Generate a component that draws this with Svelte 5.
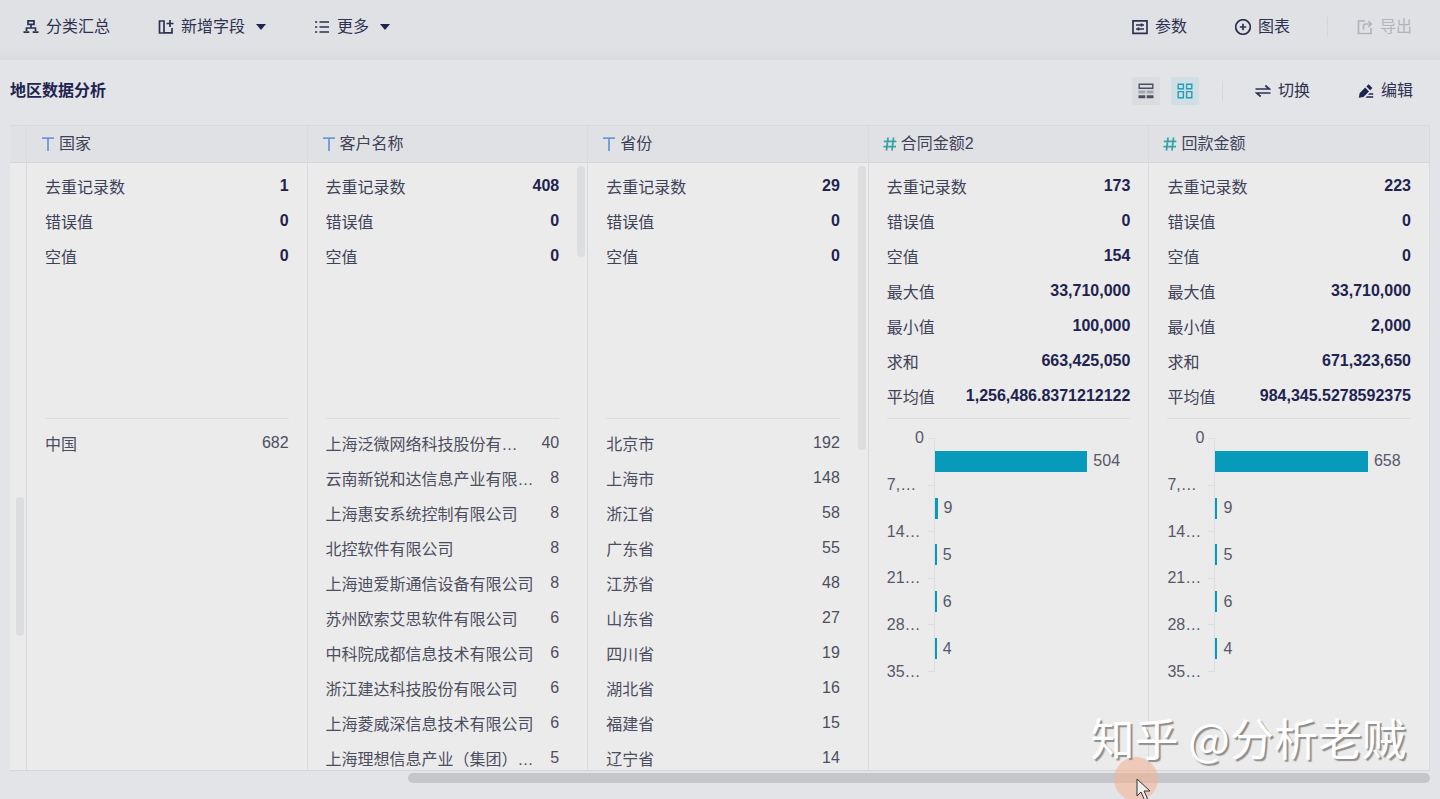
<script>
    const icons = {
        summary: "M5 1.8h6v3.6H5zM8 5.4V9M3.5 12V9h9v3M.5 13.2h5.8M9.7 13.2h5.8",
        addField: "M1.5 2h4.5v12H1.5zM6 13.8h8V9M12 1v7M8.5 4.5h7",
        more: "M5.5 3H15M5.5 8H15M5.5 13H15M1 3h2.2M1 8h2.2M1 13h2.2",
        params: "M1 1.8h14v12.6H1zM4 6h8M4 10h8M9.5 4.5v3M6.5 8.5v3",
        chart: "M8 .7a7.3 7.3 0 1 0 0 14.6A7.3 7.3 0 1 0 8 .7M8 4.8v6.4M4.8 8h6.4",
        export: "M8 2H1.5v12.5h12.5V9M6.5 10.5V7.5q0-2.5 2-2.5H14M11.3 2l3 3-3 3",
        swap: "M.5 6h14L10.3 2.5M15.5 10h-14l4.2 3.5",
    };

    const labels = {
        stats: ["去重记录数", "错误值", "空值", "最大值", "最小值", "求和", "平均值"],
        bins: ["0", "7,…", "14…", "21…", "28…", "35…"],
    };

    const fields = [
        {
            name: "国家",
            type: "text",
            stats: ["1", "0", "0"],
            rows: [["中国", 682]],
        },
        {
            name: "客户名称",
            type: "text",
            stats: ["408", "0", "0"],
            thumb: 15,
            rows: [
                ["上海泛微网络科技股份有…", 40],
                ["云南新锐和达信息产业有限…", 8],
                ["上海惠安系统控制有限公司", 8],
                ["北控软件有限公司", 8],
                ["上海迪爱斯通信设备有限公司", 8],
                ["苏州欧索艾思软件有限公司", 6],
                ["中科院成都信息技术有限公司", 6],
                ["浙江建达科技股份有限公司", 6],
                ["上海菱威深信息技术有限公司", 6],
                ["上海理想信息产业（集团）…", 5],
            ],
        },
        {
            name: "省份",
            type: "text",
            stats: ["29", "0", "0"],
            thumb: 47,
            rows: [
                ["北京市", 192],
                ["上海市", 148],
                ["浙江省", 58],
                ["广东省", 55],
                ["江苏省", 48],
                ["山东省", 27],
                ["四川省", 19],
                ["湖北省", 16],
                ["福建省", 15],
                ["辽宁省", 14],
            ],
        },
        {
            name: "合同金额2",
            type: "number",
            stats: ["173", "0", "154", "33,710,000", "100,000", "663,425,050", "1,256,486.8371212122"],
            bars: [504, 9, 5, 6, 4],
        },
        {
            name: "回款金额",
            type: "number",
            stats: ["223", "0", "0", "33,710,000", "2,000", "671,323,650", "984,345.5278592375"],
            bars: [658, 9, 5, 6, 4],
        },
    ];

    // the longest bar leaves room for its label
    function barWidth(value, bars) {
        return (value / Math.max(...bars)) * 78;
    }
</script>

{#snippet icon(name)}
    <svg class="icon" viewBox="0 0 16 16" aria-hidden="true"><path d={icons[name]} /></svg>
{/snippet}

{#snippet caret()}
    <svg class="caret" viewBox="0 0 10 6" aria-hidden="true"><path d="M0 0h10L5 6z" /></svg>
{/snippet}

<div class="page">
    <header class="toolbar">
        <button>{@render icon("summary")}分类汇总</button>
        <button>{@render icon("addField")}新增字段{@render caret()}</button>
        <button>{@render icon("more")}更多{@render caret()}</button>
        <div class="right">
            <button>{@render icon("params")}参数</button>
            <button>{@render icon("chart")}图表</button>
            <span class="separator"></span>
            <button disabled>{@render icon("export")}导出</button>
        </div>
    </header>

    <div class="subbar">
        <h1>地区数据分析</h1>
        <div class="views">
            <button class="view" aria-label="表格视图">
                <svg viewBox="0 0 16 16" aria-hidden="true">
                    <path d="M1.2 1.2h13.6v4H1.2z" fill="none" stroke="currentColor" stroke-width="1.4" />
                    <path d="M.5 7.5h6.8v3H.5zM8.7 7.5h6.8v3H8.7z" fill="#a3a5af" />
                    <path d="M.5 12.3h6.8v3H.5zM8.7 12.3h6.8v3H8.7z" fill="currentColor" />
                </svg>
            </button>
            <button class="view active" aria-label="卡片视图">
                <svg viewBox="0 0 16 16" aria-hidden="true">
                    <path
                        d="M1.2 1.2h5.2v4.6H1.2zM9.6 1.2h5.2v4.6H9.6zM1.2 8.6h5.2v6.2H1.2zM9.6 8.6h5.2v6.2H9.6z"
                        fill="none"
                        stroke="currentColor"
                        stroke-width="1.4"
                    />
                </svg>
            </button>
        </div>
        <span class="separator"></span>
        <div class="actions">
            <button>{@render icon("swap")}切换</button>
            <button>
                <svg class="pencil" viewBox="0 0 16 16" aria-hidden="true">
                    <path d="M.8 14.8l.8-4.6 5.6-5.6 3.8 3.8-5.6 5.6zM8.4 3.4L10.6 1.2l3.8 3.8-2.2 2.2zM11.5 10.3h3.7v1.5H10zM9 13.3h6.2v1.5H7.5z" />
                </svg>编辑
            </button>
        </div>
    </div>

    <main>
        <div class="board">
            <div class="previous">
                <div class="head"></div>
                <div class="track"><span class="thumb"></span></div>
            </div>
            {#each fields as field}
                <section>
                    <h2 class="head">
                        {#if field.type === "text"}
                            <svg class="type text" viewBox="0 0 14 16" aria-hidden="true"><path d="M1 2.2h12M7 2.2V15" /></svg>
                        {:else}
                            <svg class="type number" viewBox="0 0 14 16" aria-hidden="true">
                                <path d="M5 1.5L3.5 14.5M10.5 1.5L9 14.5M.8 5.3h12.6M.4 10.7H13" />
                            </svg>
                        {/if}
                        {field.name}
                    </h2>
                    <div class="body">
                        <div class="content">
                            <table class="stats">
                                <tbody>
                                    {#each field.stats as value, i}
                                        <tr><th scope="row">{labels.stats[i]}</th><td>{value}</td></tr>
                                    {/each}
                                </tbody>
                            </table>
                            {#if field.rows}
                                <table class="values">
                                    <tbody>
                                        {#each field.rows as [label, count]}
                                            <tr><th scope="row">{label}</th><td>{count}</td></tr>
                                        {/each}
                                    </tbody>
                                </table>
                            {:else}
                                <div class="chart">
                                    <div class="labels">
                                        {#each labels.bins as bin}<span>{bin}</span>{/each}
                                    </div>
                                    <div class="ticks">
                                        {#each field.bars as _}<i></i>{/each}
                                    </div>
                                    <div class="plot">
                                        {#each field.bars as value}
                                            <div class="bar-row">
                                                <span class="bar" style="width: {barWidth(value, field.bars)}%"></span>
                                                <span>{value}</span>
                                            </div>
                                        {/each}
                                    </div>
                                </div>
                            {/if}
                        </div>
                        {#if field.thumb}
                            <div class="track"><span class="thumb" style="height: {field.thumb}%"></span></div>
                        {/if}
                    </div>
                </section>
            {/each}
        </div>
        <div class="scrollbar"><span></span></div>
    </main>

    <div class="pointer">
        <svg viewBox="0 0 16 24" aria-hidden="true">
            <path d="M1 1v17l4-4 3.5 8 3-1.4L8 13h6z" />
        </svg>
    </div>
    <div class="watermark">知乎 @分析老贼</div>
</div>

<style>
    :global(body) {
        margin: 0;
    }

    .page {
        position: relative;
        display: flex;
        flex-direction: column;
        height: 100vh;
        overflow: hidden;
        background: #e3e4e8;
        color: #3e4257;
        font-family: "Liberation Sans", "Noto Sans CJK SC", sans-serif;
        font-size: 16px;
        line-height: 20px;
    }

    button {
        display: flex;
        align-items: center;
        gap: 7px;
        padding: 0;
        border: 0;
        background: none;
        color: #2d3150;
        font: inherit;
        cursor: pointer;
    }

    button:disabled {
        color: #b3b4bb;
        cursor: default;
    }

    svg {
        flex: none;
        width: 16px;
        height: 16px;
    }

    .icon {
        fill: none;
        stroke: currentColor;
        stroke-width: 1.7;
    }

    .caret {
        width: 10px;
        height: 6px;
        margin-left: 4px;
        fill: #1e2350;
    }

    .pencil {
        fill: #1e2350;
    }

    .toolbar {
        display: flex;
        flex: none;
        align-items: center;
        gap: 48px;
        box-sizing: border-box;
        height: 60px;
        padding: 0 28px 6px 23px;
        background: linear-gradient(#e0e1e5 75%, #dadbdf);
    }

    .right {
        display: flex;
        align-items: center;
        gap: 48px;
        margin-left: auto;
    }

    .separator {
        width: 1px;
        height: 20px;
        background: #d5d6da;
    }

    .right .separator {
        margin: 0 -19px 0 -11px;
    }

    .subbar {
        display: flex;
        flex: none;
        align-items: center;
        box-sizing: border-box;
        height: 65px;
        padding: 0 27px 4px 10px;
    }

    h1 {
        margin: 0 auto 0 0;
        color: #1e2350;
        font-size: 16px;
        font-weight: bold;
    }

    .views {
        display: flex;
        gap: 11px;
        margin-right: 23px;
    }

    .view {
        justify-content: center;
        width: 28px;
        height: 28px;
        border-radius: 2px;
        background: #dbdce0;
        color: #4b4d62;
    }

    .view.active {
        background: #cfdfe4;
        color: #229dbb;
    }

    .actions {
        display: flex;
        gap: 48px;
        margin-left: 32px;
    }

    main {
        display: flex;
        flex: 1;
        flex-direction: column;
        min-height: 0;
        padding: 0 10px 16px;
    }

    .board {
        display: grid;
        flex: 1;
        grid-template-columns: 17px repeat(5, minmax(0, 1fr));
        grid-template-rows: minmax(0, 1fr);
        min-height: 0;
        border-top: 1px solid #d8d9dd;
        border-bottom: 1px solid #d5d6d9;
        background: #ebebeb;
    }

    section,
    .previous {
        display: flex;
        flex-direction: column;
        min-height: 0;
        border-right: 1px solid #d9dade;
    }

    .head {
        display: flex;
        flex: none;
        align-items: center;
        gap: 4px;
        box-sizing: border-box;
        height: 37px;
        margin: 0;
        padding-left: 14px;
        border-bottom: 1px solid #d5d6da;
        background: #e0e1e5;
        color: #3e4257;
        font-size: 16px;
        font-weight: normal;
    }

    .type {
        width: 14px;
        fill: none;
        stroke-width: 1.8;
    }

    .type.text {
        stroke: #6c9ad8;
    }

    .type.number {
        stroke: #38a3a5;
    }

    .body {
        display: flex;
        flex: 1;
        min-height: 0;
        overflow: hidden;
    }

    .content {
        flex: 1;
        min-width: 0;
        padding: 0 18px;
    }

    .track {
        flex: none;
        width: 10px;
        padding-top: 3px;
    }

    .thumb {
        display: block;
        width: 8px;
        border-radius: 4px;
        background: #dcdddf;
    }

    /* this list is scrolled most of the way down */
    .previous .track {
        display: flex;
        flex: 1;
        flex-direction: column;
        margin-left: 6px;
        padding-top: 0;
    }

    .previous .track::before {
        content: "";
        height: 55%;
    }

    .previous .thumb {
        height: 23%;
    }

    table {
        display: block;
        box-sizing: border-box;
    }

    tbody {
        display: block;
    }

    tr {
        display: flex;
        align-items: center;
        gap: 12px;
        height: 35px;
    }

    th {
        flex: 1;
        min-width: 0;
        padding: 0;
        overflow: hidden;
        font-weight: normal;
        text-align: left;
        white-space: nowrap;
    }

    td {
        padding: 0 0 4px;
    }

    .stats {
        height: 256px;
        padding-top: 7px;
        border-bottom: 1px solid #dcdddf;
    }

    .stats td {
        color: #1e2350;
        font-weight: bold;
    }

    .values {
        padding-top: 8px;
        color: #4b4e60;
    }

    .chart {
        display: flex;
        height: 234px;
        margin-top: 19px;
        color: #55586a;
    }

    .labels {
        display: flex;
        flex-direction: column;
        justify-content: space-between;
        width: 37px;
        margin: -10px 4px -10px 0;
    }

    .labels span:first-child {
        text-align: right;
    }

    .ticks {
        display: flex;
        flex-direction: column;
        width: 6px;
        border-right: 1px solid #dcdde1;
        border-bottom: 1px solid #dcdde1;
    }

    .ticks i {
        flex: 1;
        border-top: 1px solid #dcdde1;
    }

    .plot {
        display: flex;
        flex: 1;
        flex-direction: column;
    }

    .bar-row {
        display: flex;
        flex: 1;
        align-items: center;
        gap: 6px;
    }

    .bar {
        min-width: 2px;
        height: 21px;
        background: #089abb;
    }

    .scrollbar {
        flex: none;
        padding-top: 2px;
    }

    .scrollbar span {
        display: block;
        width: 72%;
        height: 10px;
        margin-left: auto;
        border-radius: 5px;
        background: #c4c6c9;
    }

    .pointer {
        position: absolute;
        right: 282px;
        bottom: -2px;
        width: 44px;
        height: 44px;
        border-radius: 50%;
        background: rgba(243, 180, 150, 0.6);
    }

    .pointer svg {
        position: absolute;
        top: 21px;
        left: 22px;
        width: 16px;
        height: 24px;
        fill: #eeeeee;
        stroke: #333333;
    }

    .watermark {
        position: absolute;
        right: 34px;
        bottom: 32px;
        color: #ffffff;
        font-family: "Noto Sans CJK SC", sans-serif;
        font-size: 44px;
        line-height: 60px;
        text-shadow: 2px 2px 1px #8e8e90;
    }
</style>
